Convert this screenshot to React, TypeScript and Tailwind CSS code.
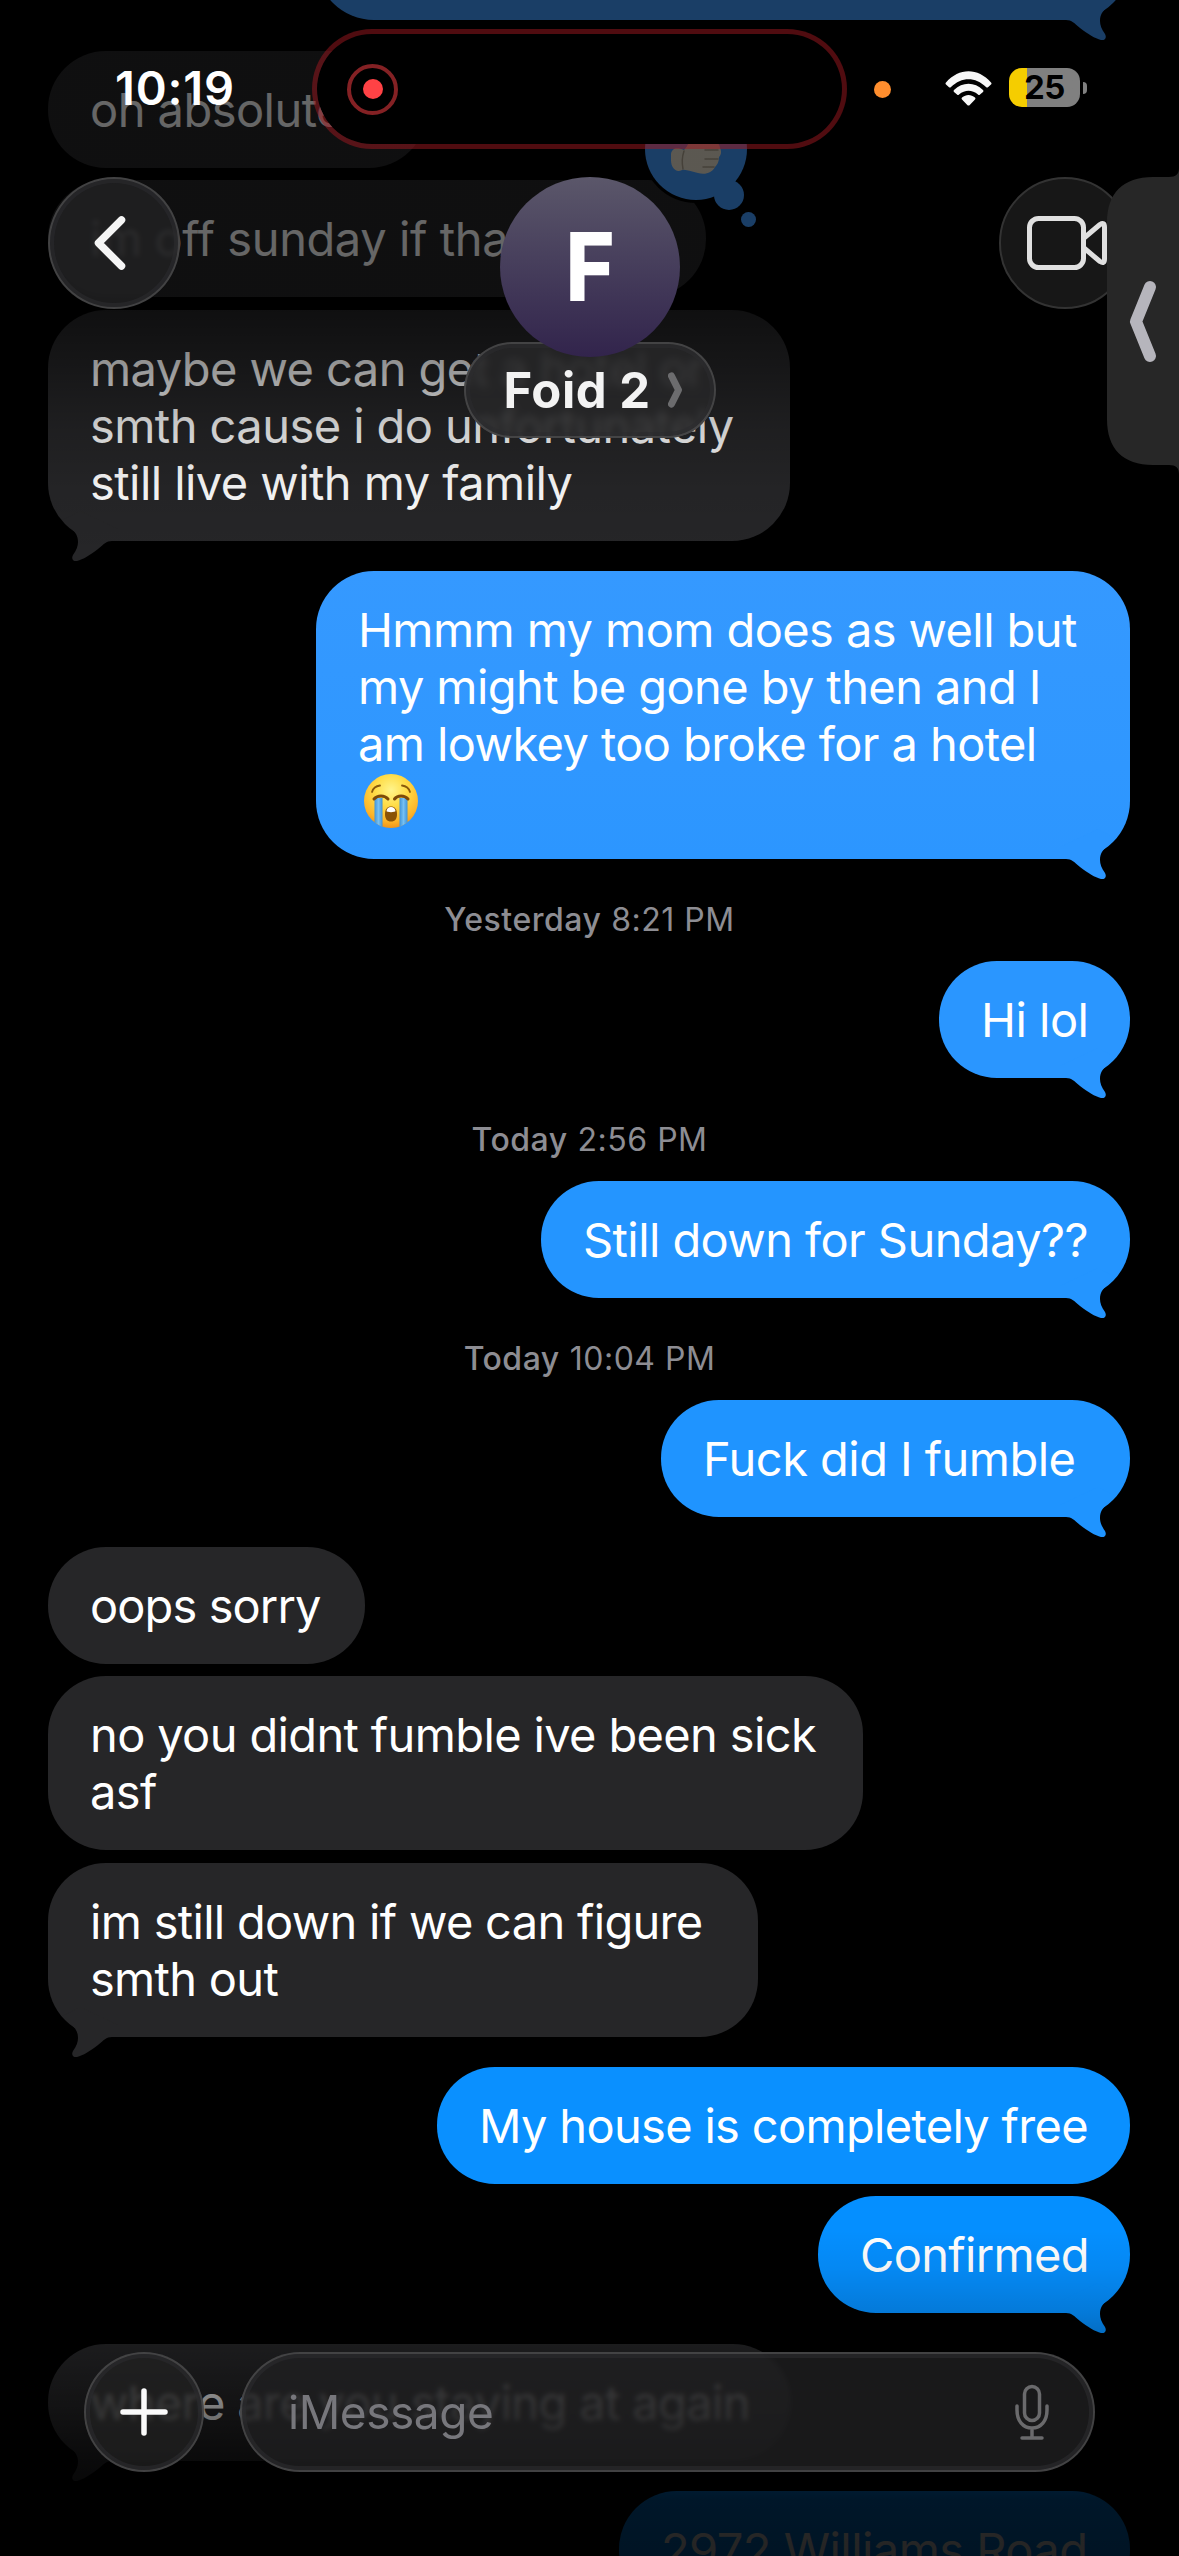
import type { ReactNode } from 'react';
import clsx from 'clsx';

interface Message {
  id: string;
  from: 'me' | 'them';
  lines: ReactNode[];
  box: string;
  tail?: boolean;
  tracking?: string;
}

interface Stamp {
  id: string;
  day: string;
  time: string;
  box: string;
}

const SOB = (
  <svg viewBox="0 0 54 54" className="ml-[6px] h-[54px] w-[54px]" role="img" aria-label="loudly crying face">
    <defs>
      <radialGradient id="sob-face" cx="50%" cy="30%" r="72%">
        <stop offset="0" stopColor="#fff48c" />
        <stop offset="0.4" stopColor="#ffdd48" />
        <stop offset="0.8" stopColor="#fdb428" />
        <stop offset="1" stopColor="#ee8f18" />
      </radialGradient>
      <linearGradient id="sob-tear" x1="0" x2="1" y1="0" y2="0">
        <stop offset="0" stopColor="#3f93d8" />
        <stop offset="0.5" stopColor="#76c0f2" />
        <stop offset="1" stopColor="#3f93d8" />
      </linearGradient>
      <clipPath id="sob-clip">
        <circle cx="27" cy="27" r="27" />
      </clipPath>
    </defs>
    <circle cx="27" cy="27" r="27" fill="url(#sob-face)" />
    <g clipPath="url(#sob-clip)">
      <rect x="10.5" y="24" width="8" height="30" fill="url(#sob-tear)" />
      <rect x="35.5" y="24" width="8" height="30" fill="url(#sob-tear)" />
    </g>
    <path d="M10 25C13.5 21 20.5 21 24 25M30.5 25C33.5 21 40.5 21 44 25" fill="none" stroke="#7d4a08" strokeWidth="3" strokeLinecap="round" />
    <path d="M8 18C9 14.5 12 12 16 11.500M46 18C45 14.500 42 12 38 11.500" fill="none" stroke="#8a5a0c" strokeWidth="1.8" strokeLinecap="round" />
    <path d="M21 40C21 35 23.5 32.5 27 32.5S33 35 33 40S31 47.5 27 47.5S21 45 21 40Z" fill="#8a5206" />
    <path d="M22.5 37C23 34.5 24.5 33 27 33S31 34.5 31.5 37C31.5 38.5 22.5 38.5 22.5 37Z" fill="#fff" />
  </svg>
);

const THREAD: (Message | Stamp)[] = [
  { id: 'm-1', from: 'me', lines: [''], box: 'w-[814px] h-[117px] -mt-[97px] bg-[#419bff]', tail: true },
  { id: 'm-2', from: 'them', lines: ['oh absolutely'], box: 'w-[379px] h-[117px] mt-[31px]' },
  { id: 'm-3', from: 'them', lines: ['im off sunday if that helps'], box: 'w-[658px] h-[117px] mt-3', tracking: 'tracking-[-0.4px]' },
  {
    id: 'm-4',
    from: 'them',
    lines: ['maybe we can get a hotel or', 'smth cause i do unfortunately', 'still live with my family'],
    box: 'w-[742px] h-[231px] mt-[13px]',
    tail: true,
    tracking: 'tracking-[-0.56px]',
  },
  {
    id: 'm-5',
    from: 'me',
    lines: ['Hmmm my mom does as well but', 'my might be gone by then and I', 'am lowkey too broke for a hotel', SOB],
    box: 'w-[814px] h-[288px] mt-[30px] bg-linear-to-b from-[#3599ff] to-[#2c96ff]',
    tail: true,
    tracking: 'tracking-[-0.59px]',
  },
  { id: 's-1', day: 'Yesterday', time: '8:21 PM', box: 'h-[102px]' },
  { id: 'm-6', from: 'me', lines: ['Hi lol'], box: 'w-[191px] h-[117px] bg-[#2a96ff]', tail: true, tracking: 'tracking-[-0.5px]' },
  { id: 's-2', day: 'Today', time: '2:56 PM', box: 'h-[103px]' },
  { id: 'm-7', from: 'me', lines: ['Still down for Sunday??'], box: 'w-[589px] h-[117px] bg-[#2495ff]', tail: true, tracking: 'tracking-[-0.58px]' },
  { id: 's-3', day: 'Today', time: '10:04 PM', box: 'h-[102px]' },
  { id: 'm-8', from: 'me', lines: ['Fuck did I fumble'], box: 'w-[469px] h-[117px] bg-[#1f94ff]', tail: true, tracking: 'tracking-[-0.55px]' },
  { id: 'm-9', from: 'them', lines: ['oops sorry'], box: 'w-[317px] h-[117px] mt-[30px]', tracking: 'tracking-[-0.9px]' },
  { id: 'm-10', from: 'them', lines: ['no you didnt fumble ive been sick', 'asf'], box: 'w-[815px] h-[174px] mt-3', tracking: 'tracking-[-0.64px]' },
  { id: 'm-11', from: 'them', lines: ['im still down if we can figure', 'smth out'], box: 'w-[710px] h-[174px] mt-[13px]', tail: true, tracking: 'tracking-[-0.7px]' },
  { id: 'm-12', from: 'me', lines: ['My house is completely free'], box: 'w-[693px] h-[117px] mt-[30px] bg-[#0a90ff]', tracking: 'tracking-[-0.68px]' },
  { id: 'm-13', from: 'me', lines: ['Confirmed'], box: 'w-[312px] h-[117px] mt-3 bg-[#058fff]', tail: true, tracking: 'tracking-[-0.65px]' },
  { id: 'm-14', from: 'them', lines: ['where are you staying at again'], box: 'w-[743px] h-[117px] mt-[31px]', tail: true, tracking: 'tracking-[-0.65px]' },
  { id: 'm-15', from: 'me', lines: ['2972 Williams Road'], box: 'w-[511px] h-[117px] mt-[30px] bg-[#008cff]' },
];

// Fill colours of the tails that hang below the bubbles
const TAIL_FILL: Record<string, string> = {
  'm-1': 'text-[#419bff]',
  'm-5': 'text-[#2c96ff]',
  'm-6': 'text-[#2a96ff]',
  'm-7': 'text-[#2495ff]',
  'm-8': 'text-[#1f94ff]',
  'm-13': 'text-[#058fff]',
};

function Tail({ message }: { message: Message }) {
  return (
    <svg
      viewBox="0 0 70 50"
      className={clsx(
        'absolute -bottom-5 h-[50px] w-[70px]',
        message.from === 'me' ? 'right-0' : 'left-0 -scale-x-100',
        TAIL_FILL[message.id] ?? 'text-[#262628]'
      )}
      fill="currentColor"
    >
      <path d="M0 18V30H6C12 30 14 33 20 38C28 44 35 48.5 41 50C45 51 47 47.5 45 44C41.5 39 40 35 40 31C40 25 42.5 21 47 17.5C50 15 53 12 55.5 9L38 0Z" />
    </svg>
  );
}

function Bubble({ message }: { message: Message }) {
  const mine = message.from === 'me';
  return (
    <div
      className={clsx(
        'relative shrink-0 rounded-[58px] px-[42px] pt-[30px] text-[47px] leading-[57px] whitespace-nowrap text-white',
        mine ? 'self-end' : 'self-start bg-[#262628]',
        message.box,
        message.tracking ?? 'tracking-[-0.54px]'
      )}
    >
      {message.lines.map((line, i) => (
        <div key={i} className="flex h-[57px] items-center">{line}</div>
      ))}
      {message.tail && <Tail message={message} />}
    </div>
  );
}

function Timestamp({ stamp }: { stamp: Stamp }) {
  return (
    <div
      className={clsx(
        'flex shrink-0 items-center justify-center gap-[10px] self-stretch pt-5 pl-px text-[32px] leading-none tracking-[0.5px] text-[#8d8d93]',
        stamp.box
      )}
    >
      <span className="font-medium">{stamp.day}</span>
      <span>{stamp.time}</span>
    </div>
  );
}

function Tapback() {
  return (
    <svg viewBox="0 0 120 140" className="absolute top-[94px] left-[641px] h-[140px] w-[120px]">
      <circle cx="55" cy="55" r="54" fill="#000" />
      <circle cx="55" cy="55" r="51" fill="#419bff" />
      <circle cx="88" cy="101" r="15" fill="#419bff" />
      <circle cx="107.5" cy="125.5" r="7.5" fill="#419bff" />
      <path
        d="M30 60C31 54 36 53 43 56C47 52 49 46 51 40L66 42C70 44 79 48 79 54C81 58 80 61 78 63C78 68 76 71 74 73C71 79 64 81 57 79C51 78 45 75 41 76C35 79 30 74 30 66Z"
        fill="#e4dccb"
      />
      <path d="M64 56H77M64 65H77M62 73H73M43 57C41 63 41 70 42 75" fill="none" stroke="#aca18e" strokeWidth="1.5" strokeLinecap="round" />
    </svg>
  );
}

function StatusBar() {
  return (
    <div className="absolute inset-x-0 top-0 flex h-[178px] items-start">
      <span className="ml-[115px] w-[197px] pt-[59px] text-[47px] leading-[58px] font-semibold tracking-[0.8px] text-white">10:19</span>
      <div className="mt-[29px] flex h-[120px] w-[535px] items-center rounded-full border-[5px] border-[#a0181f]/50 bg-black bg-clip-padding pl-[30px]">
        <div className="flex h-[51px] w-[51px] items-center justify-center rounded-full border-4 border-[#842124]">
          <div className="h-5 w-5 rounded-full bg-[#ff4245]" />
        </div>
      </div>
      <div className="mt-[81px] ml-[27px] h-[17px] w-[17px] rounded-full bg-[#ff8e2e]" />
      <svg viewBox="0 0 47 36" className="mt-[70px] ml-[54px] h-9 w-[47px]" fill="#f7f7f7">
        <path d="M1 12.5C14-2.5 33-2.5 46 12.5Q47 13.5 46 14.5L43 17.2Q42 18 41 17C30.5 6.5 16.5 6.5 6 17Q5 18 4 17.2L1 14.5Q0 13.5 1 12.5Z" />
        <path d="M9 20C17.5 11.5 29.5 11.5 38 20Q39 21 38 22L35 24.5Q34 25.5 33 24.5C27 19.5 20 19.5 14 24.5Q13 25.5 12 24.5L9 22Q8 21 9 20Z" />
        <path d="M17 27.5C21 24 26 24 30 27.5Q31 28.5 30 29.5L24.5 35.2Q23.5 36 22.5 35.2L17 29.5Q16 28.5 17 27.5Z" />
      </svg>
      <div className="mt-[68px] ml-[17px] flex items-center gap-[3px]">
        <div className="flex h-[39px] w-[71px] items-center justify-center rounded-[13px] bg-linear-to-r from-[#f5cd00] from-25% to-[#808080] to-25% text-[33px] leading-none font-bold tracking-[-0.5px] text-black">
          25
        </div>
        <div className="h-3 w-1 rounded-r-full bg-[#808080]" />
      </div>
    </div>
  );
}

const GLASS = 'border-2 border-[#4c4c4e]/80 shadow-[inset_0_0_0_4px_#2c2c2e99]';

function Header() {
  return (
    <>
      <div className="absolute inset-x-0 top-[177px] flex items-start justify-between px-12">
        <button className={clsx('flex h-[132px] w-[132px] items-center justify-center rounded-full bg-[#212122]/85 backdrop-blur-[2.5px]', GLASS)} aria-label="Back">
          <svg viewBox="0 0 32 54" className="mr-[9px] h-[54px] w-8" fill="none" stroke="#f5f5f5" strokeWidth="7.5" strokeLinecap="round" strokeLinejoin="round">
            <path d="M27.5 4L4.5 27L27.5 50" />
          </svg>
        </button>

        <div className="flex flex-col items-center">
          <div className="z-10 flex h-[180px] w-[180px] items-center justify-center rounded-full bg-linear-to-b from-[#5b576a] to-[#32244c] text-[92px] leading-none font-bold text-white">
            <span className="scale-x-90 [-webkit-text-stroke:2px_white]">F</span>
          </div>
          <div className={clsx('-mt-[15px] flex h-24 w-[252px] items-center rounded-full bg-[#272728]/85 pl-[38px] backdrop-blur-[4px]', GLASS)}>
            <span className="text-[49px] leading-none font-bold tracking-[0.5px] text-[#f3f3f3]">Foid 2</span>
            <svg viewBox="0 0 14 36" className="ml-[17px] h-9 w-3.5" fill="none" stroke="#6c6c6e" strokeWidth="7" strokeLinecap="round" strokeLinejoin="round">
              <path d="M3.5 4L10.5 18L3.5 32" />
            </svg>
          </div>
        </div>

        <button className="flex h-[132px] w-[132px] items-center rounded-full border-2 border-[#333] bg-[#171717] pl-[26px]" aria-label="Video call">
          <svg viewBox="0 0 82 54" className="h-[54px] w-[82px] shrink-0" fill="none" stroke="#e0e0e0" strokeWidth="5" strokeLinejoin="round">
            <rect x="2.5" y="2.5" width="54" height="49" rx="9" />
            <path d="M57 22L73 8.5Q77.5 5.5 77.5 11V43Q77.5 48.5 73 45.5L57 32" />
          </svg>
        </button>
      </div>

      {/* Slide-over handle docked to the screen edge */}
      <div className="absolute top-[168px] right-0 flex h-[306px] w-[72px]">
        <svg viewBox="0 0 72 306" className="h-full w-full">
          <path d="M72 0C72 6 69 9 62 9H46C16 9 0 25 0 55V251C0 281 16 297 46 297H62C69 297 72 300 72 306Z" fill="#272727" />
          <path d="M43 119L29 153.5L43 188" fill="none" stroke="#b6b5bc" strokeWidth="12" strokeLinecap="round" strokeLinejoin="round" />
        </svg>
      </div>
    </>
  );
}

function Composer() {
  return (
    <div className="absolute inset-x-0 bottom-[84px] flex gap-9 px-[84px]">
      <button className={clsx('flex h-[120px] w-[120px] shrink-0 items-center justify-center rounded-full bg-[#212122]/75 backdrop-blur-[2.5px]', GLASS)} aria-label="Add">
        <svg viewBox="0 0 48 48" className="h-12 w-12" fill="none" stroke="#fafafa" strokeWidth="5.5" strokeLinecap="round">
          <path d="M24 3V45M3 24H45" />
        </svg>
      </button>
      <div className={clsx('flex h-[120px] w-[855px] items-center justify-between rounded-full bg-[#202021]/78 pr-[44px] pl-[46px] backdrop-blur-[2.5px]', GLASS)}>
        <span className="text-[46px] leading-none tracking-[-0.44px] text-[#77777c]">iMessage</span>
        <svg viewBox="0 0 34 58" className="h-[58px] w-[34px]" fill="none" stroke="#6a6a6c" strokeWidth="3.5" strokeLinecap="round">
          <rect x="9.5" y="3.5" width="15" height="34" rx="7.5" />
          <path d="M2 23V27C2 38 8 45 17 45S32 38 32 27V23M17 45.5V54M7 55H27" />
        </svg>
      </div>
    </div>
  );
}

export default function App() {
  return (
    <div className="relative h-[2556px] w-[1179px] overflow-hidden bg-black font-['Inter','Liberation_Sans',sans-serif]">
      {/* Conversation */}
      <div className="flex h-full flex-col pr-[49px] pl-12">
        {THREAD.map((item) =>
          'day' in item ? <Timestamp key={item.id} stamp={item} /> : <Bubble key={item.id} message={item} />
        )}
      </div>
      <Tapback />

      {/* Scroll edge fades */}
      <div className="absolute inset-x-0 top-0 h-[600px] bg-[linear-gradient(to_bottom,rgb(0_0_0/0.6)_310px,rgb(0_0_0/0.4)_370px,rgb(0_0_0/0.2)_428px,rgb(0_0_0/0.06)_488px,transparent_560px)]" />
      <div className="absolute inset-x-0 bottom-0 h-[336px] bg-[linear-gradient(to_bottom,transparent_10px,rgb(0_0_0/0.05)_50px,rgb(0_0_0/0.15)_92px,rgb(0_0_0/0.28)_126px,rgb(0_0_0/0.5)_184px,rgb(0_0_0/0.72)_238px,rgb(0_0_0/0.84)_280px,rgb(0_0_0/0.86)_336px)]" />

      <StatusBar />
      <Header />
      <Composer />
    </div>
  );
}
